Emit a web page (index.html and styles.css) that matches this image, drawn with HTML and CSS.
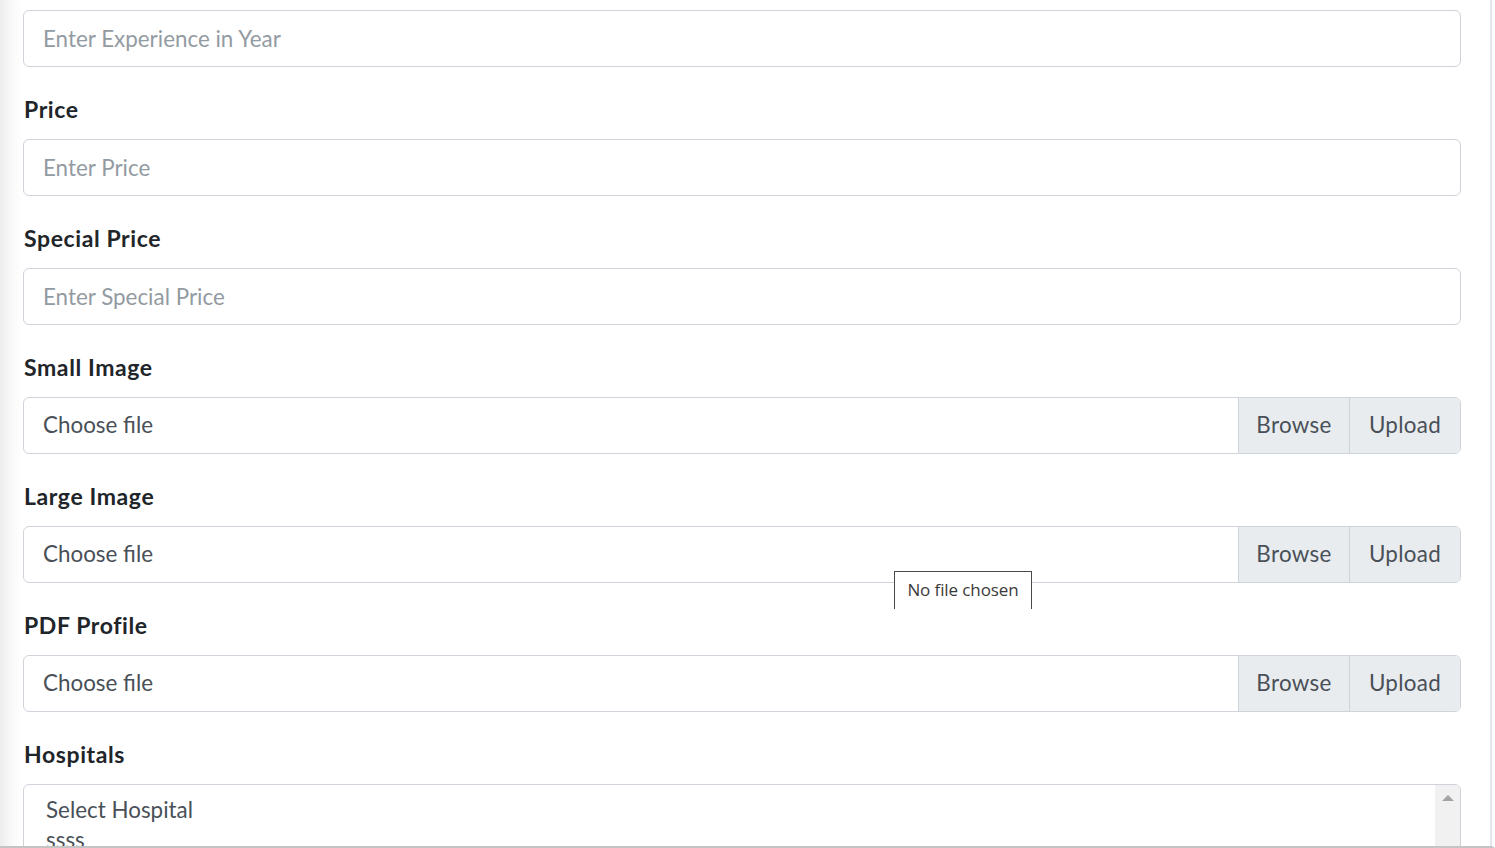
FILE: index.html
```html
<!DOCTYPE html>
<html lang="en">
<head>
<meta charset="utf-8">
<title>Doctor Form</title>
<link rel="stylesheet" href="styles.css">
</head>
<body>
<div class="viewport">
  <form class="form">
    <div class="form-group">
      <div class="form-control placeholder">Enter Experience in Year</div>
    </div>
    <div class="form-group">
      <label class="label">Price</label>
      <div class="form-control placeholder">Enter Price</div>
    </div>
    <div class="form-group">
      <label class="label">Special Price</label>
      <div class="form-control placeholder">Enter Special Price</div>
    </div>
    <div class="form-group">
      <label class="label">Small Image</label>
      <div class="input-group">
        <div class="file-label">Choose file</div>
        <div class="btn-browse">Browse</div>
        <div class="btn-upload">Upload</div>
      </div>
    </div>
    <div class="form-group">
      <label class="label">Large Image</label>
      <div class="input-group">
        <div class="file-label">Choose file</div>
        <div class="btn-browse">Browse</div>
        <div class="btn-upload">Upload</div>
        <div class="tooltip">No file chosen</div>
      </div>
    </div>
    <div class="form-group">
      <label class="label">PDF Profile</label>
      <div class="input-group">
        <div class="file-label">Choose file</div>
        <div class="btn-browse">Browse</div>
        <div class="btn-upload">Upload</div>
      </div>
    </div>
    <div class="form-group">
      <label class="label">Hospitals</label>
      <div class="listbox">
        <div class="options">
          <div class="option">Select Hospital</div>
          <div class="option">ssss</div>
          <div class="option">Apollo</div>
        </div>
        <div class="scrollbar">
          <div class="arrow-up"></div>
        </div>
      </div>
    </div>
  </form>
</div>
</body>
</html>
```
FILE: styles.css
```css
* { box-sizing: border-box; }
html, body { margin: 0; padding: 0; background: #fff; }
body {
  font-family: "Lato", "Open Sans", sans-serif;
  font-size: 22.4px;
  color: #212529;
}
.viewport {
  width: 1495px;
  height: 848px;
  overflow: hidden;
  background: linear-gradient(to right, #ececec 0, #f8f8f8 10px, #fff 22px);
  border-right: 3px solid #fff;
  border-bottom: 2px solid #c4c4c4;
  position: relative;
}
.viewport::after {
  content: "";
  position: absolute;
  top: 0;
  bottom: 0;
  right: 0;
  width: 2px;
  background: #e6e6ea;
}
.form {
  width: 1438px;
  margin-left: 23px;
  padding-top: 10px;
}
.form-group { margin-bottom: 24px; }
.label {
  display: block;
  font-weight: 700;
  font-size: 23px;
  letter-spacing: 0.6px;
  line-height: 36px;
  margin-bottom: 12px;
  padding-left: 1px;
  color: #212529;
}
.form-control {
  height: 57px;
  border: 1px solid #ced4da;
  border-radius: 6px;
  padding: 0 19px;
  display: flex;
  align-items: center;
  color: #495057;
  background: #fff;
}
.placeholder { color: #939ba2; }
.input-group {
  position: relative;
  display: flex;
  height: 57px;
  border: 1px solid #ced4da;
  border-radius: 6px;
  background: #fff;
}
.file-label {
  flex: 1;
  display: flex;
  align-items: center;
  padding: 0 19px 2px;
  color: #495057;
}
.btn-browse, .btn-upload {
  width: 111px;
  display: flex;
  align-items: center;
  justify-content: center;
  background: #e9ecef;
  color: #495057;
  border-left: 1px solid #ced4da;
  padding-bottom: 2px;
  letter-spacing: 0.3px;
}
.btn-upload { border-radius: 0 5px 5px 0; }
.tooltip {
  position: absolute;
  left: 870px;
  top: 44px;
  width: 138px;
  height: 38px;
  border: 1px solid #4a4a4a;
  border-bottom: none;
  background: #fff;
  font-family: "Open Sans", "Noto Sans", sans-serif;
  font-size: 17px;
  letter-spacing: -0.1px;
  color: #3a3a3a;
  display: flex;
  align-items: center;
  justify-content: center;
  padding-bottom: 2px;
  z-index: 2;
}
.listbox {
  display: flex;
  height: 120px;
  border: 1px solid #ced4da;
  border-radius: 6px;
  background: #fff;
  overflow: hidden;
}
.options {
  flex: 1;
  padding: 10px 0 0 22px;
  color: #495057;
}
.option { line-height: 30px; }
.scrollbar {
  width: 25px;
  background: #f1f1f1;
  display: flex;
  justify-content: center;
  padding-top: 10px;
}
.arrow-up {
  width: 0;
  height: 0;
  border-left: 6px solid transparent;
  border-right: 6px solid transparent;
  border-bottom: 6px solid #a3a3a3;
}
```
